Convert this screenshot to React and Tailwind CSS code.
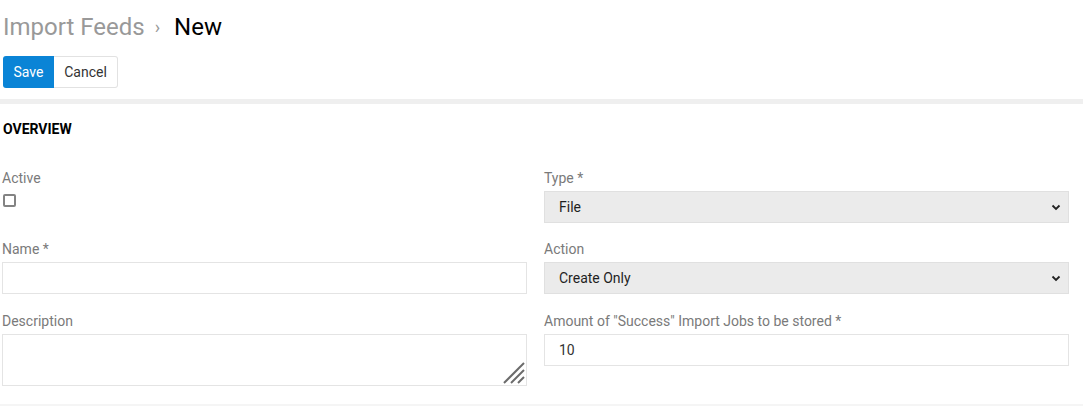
import React from 'react';

function Chevron() {
  return (
    <svg
      className="pointer-events-none absolute right-[8px] top-1/2 -translate-y-1/2"
      width="10"
      height="8"
      viewBox="0 0 10 8"
      fill="none"
    >
      <path d="M1.5 2.5 L5 6 L8.5 2.5" stroke="#222" strokeWidth="1.8" />
    </svg>
  );
}

function ResizeGrip() {
  return (
    <svg
      className="pointer-events-none absolute bottom-[2px] right-[2px]"
      width="22"
      height="22"
      viewBox="0 0 22 22"
      fill="none"
      stroke="#6b6b6b"
      strokeWidth="2"
    >
      <path d="M1 21 L21 1" />
      <path d="M8 21 L21 8" />
      <path d="M15 21 L21 15" />
    </svg>
  );
}

function Label({ children }) {
  return <label className="block text-sm leading-5 text-[#7a7a7a]">{children}</label>;
}

function SelectField({ label, value, options }) {
  return (
    <div>
      <Label>{label}</Label>
      <div className="relative mt-[3px]">
        <select
          defaultValue={value}
          className="block h-8 w-full appearance-none rounded-none border border-[#e0e0e0] bg-[#ebebeb] pl-[14px] pr-8 text-sm text-[#1f1f1f] outline-none"
        >
          {options.map(o => (
            <option key={o}>{o}</option>
          ))}
        </select>
        <Chevron />
      </div>
    </div>
  );
}

export default function App() {
  return (
    <div className="min-h-[406px] bg-white font-['Roboto','Liberation_Sans',sans-serif]">
      <div className="pl-[3px] pt-[11px]">
        <h1 className="flex items-center text-2xl leading-8">
          <span className="text-[#999]">Import Feeds</span>
          <span className="ml-[10px] mr-[14px] text-lg text-[#999]">›</span>
          <span className="text-black">New</span>
        </h1>
        <div className="mt-[13px] flex">
          <button className="h-8 w-[51px] rounded-l-[3px] bg-[#0a84d6] text-sm text-white">Save</button>
          <button className="h-8 w-16 rounded-r-[3px] border border-l-0 border-[#e2e2e2] bg-white text-sm text-[#333]">
            Cancel
          </button>
        </div>
      </div>

      <div className="mt-[11px] h-[5px] bg-[#efefef]" />

      <div className="pl-[2px] pr-[14px] pb-[18px]">
        <h2 className="pl-[1px] pt-[15px] text-sm font-bold leading-5 text-black">OVERVIEW</h2>

        <div className="mt-[29px] grid grid-cols-2 gap-x-[17px] gap-y-4">
          <div>
            <Label>Active</Label>
            <input
              type="checkbox"
              className="mt-[6px] ml-[1px] block h-[13px] w-[13px] appearance-none rounded-[2px] border-2 border-[#838383] bg-white"
            />
          </div>
          <SelectField label="Type *" value="File" options={['File', 'URL']} />

          <div>
            <Label>Name *</Label>
            <input
              type="text"
              className="mt-[3px] block h-8 w-full rounded-none border border-[#e4e4e4] bg-white px-[14px] text-sm outline-none"
            />
          </div>
          <SelectField
            label="Action"
            value="Create Only"
            options={['Create Only', 'Update Only', 'Create & Update']}
          />

          <div className="mt-px">
            <Label>Description</Label>
            <div className="relative mt-[3px]">
              <textarea
                rows={2}
                className="block h-[52px] w-full resize-none rounded-none border border-[#e4e4e4] bg-white px-[14px] py-1 text-sm outline-none"
              />
              <ResizeGrip />
            </div>
          </div>
          <div className="mt-px">
            <Label>Amount of "Success" Import Jobs to be stored *</Label>
            <input
              type="text"
              defaultValue="10"
              className="mt-[3px] block h-8 w-full rounded-none border border-[#e4e4e4] bg-white px-[14px] text-sm text-[#333] outline-none"
            />
          </div>
        </div>
      </div>

      <div className="h-[5px] bg-[#f5f5f5]" />
    </div>
  );
}
